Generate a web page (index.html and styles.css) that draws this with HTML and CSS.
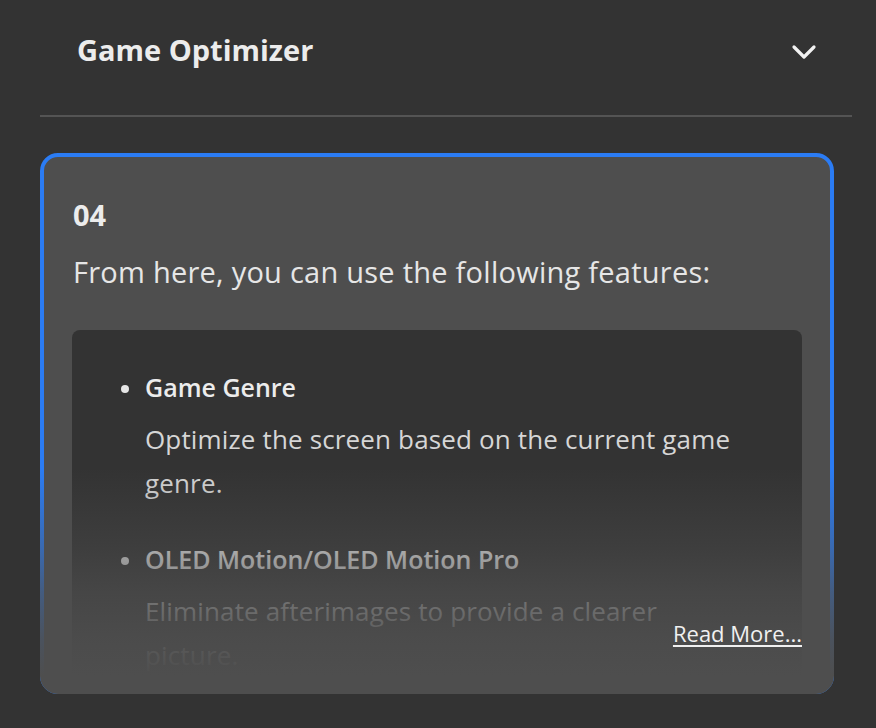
FILE: index.html
```html
<!DOCTYPE html>
<html lang="en">
<head>
<meta charset="utf-8">
<title>Game Optimizer</title>
<link rel="stylesheet" href="styles.css">
</head>
<body>
<div class="page">
  <header class="acc-head">
    <h2 class="acc-title">Game Optimizer</h2>
    <svg class="chevron" width="26" height="16" viewBox="0 0 26 16" aria-hidden="true">
      <path d="M3 3 L13 13 L23 3" fill="none" stroke="#f2f2f2" stroke-width="3.2" stroke-linecap="round" stroke-linejoin="round"/>
    </svg>
  </header>
  <div class="divider"></div>
  <section class="card">
    <div class="card-body">
      <div class="step">04</div>
      <p class="intro">From here, you can use the following features:</p>
      <div class="panel">
        <ul class="features">
          <li class="feature">
            <span class="feature-title">Game Genre</span>
            <span class="feature-desc">Optimize the screen based on the current game genre.</span>
          </li>
          <li class="feature">
            <span class="feature-title">OLED Motion/OLED Motion Pro</span>
            <span class="feature-desc">Eliminate afterimages to provide a clearer picture.</span>
          </li>
        </ul>
      </div>
    </div>
    <div class="fade"></div>
    <a class="more" href="#">Read More...</a>
  </section>
</div>
</body>
</html>
```
FILE: styles.css
```css
html, body {
  margin: 0;
  padding: 0;
  background: #333333;
}
body {
  font-family: "Open Sans", "Noto Sans", sans-serif;
  color: #e6e6e6;
}
.page {
  width: 876px;
  height: 728px;
  padding: 0 24px 0 40px;
  box-sizing: border-box;
  overflow: hidden;
}
.acc-head {
  display: flex;
  align-items: center;
  justify-content: space-between;
  padding: 32px 35px 47px 37px;
}
.acc-title {
  margin: 0;
  font-size: 29px;
  line-height: 36px;
  font-weight: 700;
  color: #ececec;
}
.chevron {
  display: block;
  margin-top: 4px;
}
.divider {
  height: 2px;
  background: #545454;
}
.card {
  position: relative;
  width: 794px;
  height: 541px;
  margin-top: 36px;
  box-sizing: border-box;
  border: 4px solid #2b7cf4;
  border-radius: 18px;
  background: #4e4e4e;
}
.card-body {
  height: 100%;
  overflow: hidden;
  box-sizing: border-box;
  padding: 40px 28px 0 28px;
  border-radius: 14px;
}
.step {
  font-size: 29px;
  line-height: 36px;
  font-weight: 700;
  color: #ececec;
  padding-left: 1px;
}
.intro {
  margin: 21px 0 0 0;
  font-size: 29px;
  line-height: 36px;
  letter-spacing: 0.25px;
  color: #e6e6e6;
  padding-left: 1px;
}
.panel {
  margin-top: 40px;
  background: #333333;
  border-radius: 8px;
  padding: 35px 60px 60px 49px;
}
.features {
  list-style: none;
  margin: 0;
  padding: 0;
  display: flex;
  flex-direction: column;
  gap: 32px;
}
.feature {
  display: grid;
  grid-template-columns: 8px 1fr;
  column-gap: 16px;
}
.feature::before {
  content: "";
  grid-column: 1;
  grid-row: 1;
  width: 8px;
  height: 8px;
  margin-top: 20px;
  border-radius: 50%;
  background: #e6e6e6;
}
.feature-title {
  grid-column: 2;
  grid-row: 1;
  font-size: 25px;
  line-height: 44px;
  font-weight: 600;
  color: #ececec;
}
.feature-desc {
  grid-column: 2;
  grid-row: 2;
  margin-top: 8px;
  font-size: 26px;
  line-height: 44px;
  letter-spacing: 0.15px;
  color: #d6d6d6;
}
.fade {
  position: absolute;
  left: -4px;
  right: -4px;
  bottom: -4px;
  height: 226px;
  border-radius: 0 0 18px 18px;
  background: linear-gradient(to bottom,
    rgba(78,78,78,0) 0%,
    rgba(78,78,78,0.4) 35%,
    rgba(78,78,78,0.7) 55%,
    rgba(78,78,78,0.9) 75%,
    rgba(78,78,78,1) 92%);
  pointer-events: none;
}
.more {
  position: absolute;
  right: 28px;
  bottom: 42px;
  font-size: 22px;
  line-height: 30px;
  color: #f0f0f0;
  text-decoration: underline;
  text-underline-offset: 3px;
  text-decoration-thickness: 2px;
}
```
